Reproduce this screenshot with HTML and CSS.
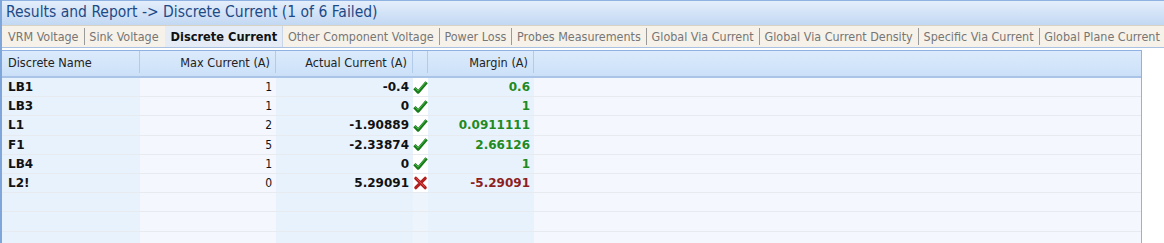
FILE: index.html
```html
<!DOCTYPE html>
<html lang="en">
<head>
  <meta charset="UTF-8">
  <title>Results and Report</title>
  <link rel="stylesheet" href="styles.css">
</head>
<body>

<div class="panel">
  <div class="title-bar">Results and Report -&gt; Discrete Current (1 of 6 Failed)</div>

  <div class="tabs">
    <span class="tab">VRM Voltage</span>
    <span class="tab">Sink Voltage</span>
    <span class="tab active">Discrete Current</span>
    <span class="tab">Other Component Voltage</span>
    <span class="tab">Power Loss</span>
    <span class="tab">Probes Measurements</span>
    <span class="tab">Global Via Current</span>
    <span class="tab">Global Via Current Density</span>
    <span class="tab">Specific Via Current</span>
    <span class="tab">Global Plane Current</span>
  </div>

  <div class="grid">
    <div class="row head">
      <div class="cell name">Discrete Name</div>
      <div class="cell max num">Max Current (A)</div>
      <div class="cell actual num">Actual Current (A)</div>
      <div class="cell status"></div>
      <div class="cell margin num">Margin (A)</div>
      <div class="cell rest"></div>
    </div>
    <div id="rows"></div>
  </div>
</div>

<script>
  const data = [
    { name: 'LB1', max: '1', actual: '-0.4', ok: true, margin: '0.6' },
    { name: 'LB3', max: '1', actual: '0', ok: true, margin: '1' },
    { name: 'L1', max: '2', actual: '-1.90889', ok: true, margin: '0.0911111' },
    { name: 'F1', max: '5', actual: '-2.33874', ok: true, margin: '2.66126' },
    { name: 'LB4', max: '1', actual: '0', ok: true, margin: '1' },
    { name: 'L2!', max: '0', actual: '5.29091', ok: false, margin: '-5.29091' }
  ];

  const checkIcon = '<svg width="17" height="17" viewBox="0 0 17 17">' +
    '<path d="M1.6 9.2 L5.8 13.8 L15.4 2.6" stroke="#16791a" stroke-width="3.6" fill="none" stroke-linejoin="round"/>' +
    '<path d="M2.3 9 L5.8 12.6 L14.6 2.4" stroke="#4fbf4a" stroke-width="1" fill="none"/></svg>';
  const crossIcon = '<svg width="16" height="16" viewBox="0 0 16 16">' +
    '<path d="M3 3 L13 13 M13 3 L3 13" stroke="#b3201f" stroke-width="3.4" stroke-linecap="round"/>' +
    '<path d="M3.5 3 L12.5 12" stroke="#d9534f" stroke-width="1"/></svg>';

  const rows = document.getElementById('rows');
  for (let i = 0; i < 9; i++) {
    const d = data[i];
    const row = document.createElement('div');
    row.className = 'row';
    if (d) {
      row.innerHTML =
        '<div class="cell name bold">' + d.name + '</div>' +
        '<div class="cell max num">' + d.max + '</div>' +
        '<div class="cell actual num bold">' + d.actual + '</div>' +
        '<div class="cell status filled">' + (d.ok ? checkIcon : crossIcon) + '</div>' +
        '<div class="cell margin num bold ' + (d.ok ? 'pass' : 'fail') + '">' + d.margin + '</div>' +
        '<div class="cell rest"></div>';
    } else {
      row.innerHTML =
        '<div class="cell name"></div><div class="cell max"></div><div class="cell actual"></div>' +
        '<div class="cell status"></div><div class="cell margin"></div><div class="cell rest"></div>';
    }
    rows.appendChild(row);
  }
</script>

</body>
</html>
```

FILE: styles.css
```css
* {
  margin: 0;
  padding: 0;
  box-sizing: border-box;
}

body {
  background-color: #ffffff;
  font-family: "DejaVu Sans Condensed", "DejaVu Sans", sans-serif;
  height: 243px;
  overflow: hidden;
}

.panel {
  border-left: 2px solid #7ea6da;
  height: 243px;
  overflow: hidden;
}

.title-bar {
  height: 25px;
  border-top: 1px solid #8fb2e2;
  background: linear-gradient(#e4eefb, #c2d8f3);
  color: #1d4a86;
  font-size: 15.5px;
  line-height: 23px;
  padding-left: 4px;
  white-space: nowrap;
}

.tabs {
  display: flex;
  height: 23px;
  background-color: #f6f2e9;
  border-top: 1px solid #d8d2c4;
  border-bottom: 1px solid #a9c2e4;
  font-size: 12.45px;
  color: #767676;
  white-space: nowrap;
}

.tab {
  padding: 0 5px 0 4.8px;
  border-left: 1px solid #9a9a9a;
  margin: 2px 0;
  line-height: 17px;
}

.tab:first-child {
  border-left: none;
  padding-left: 6px;
}

.tab.active,
.tab.active + .tab {
  border-left: none;
}

.tab.active {
  background-color: #e5ecf5;
  color: #111;
  font-size: 12.7px;
  font-weight: bold;
  padding: 0 5px 0 6px;
  margin: 0 0 0 1px;
  line-height: 21px;
  border-right: 1px solid #c9d6e8;
}

.grid {
  margin-top: 2px;
  width: 1140px;
  border-top: 1px solid #8fb2e2;
  border-right: 1px solid #8fb2e2;
  font-size: 12px;
  color: #111;
}

.row {
  display: flex;
  height: 19.2px;
  border-bottom: 1px solid #e7ebef;
}

.cell {
  display: flex;
  align-items: center;
  padding: 0 4px;
  white-space: nowrap;
}

.num {
  justify-content: flex-end;
}

.bold {
  font-family: "DejaVu Sans", sans-serif;
  font-weight: bold;
}

.name   { width: 138px; background-color: #e8f2fd; padding-left: 6px; }
.max    { width: 136px; background-color: #f4f8fe; }
.actual { width: 137px; background-color: #e8f2fd; }
.status { width: 15px;  background-color: #edf4fc; padding: 0; justify-content: center; }
.margin { width: 106px; background-color: #e8f2fd; }
.rest   { flex: 1;      background-color: #f4f8fe; }

.status.filled {
  background-color: #ffffff;
  overflow: visible;
}

.pass { color: #1f8a1f; }
.fail { color: #8e1f1f; }

.row.head {
  height: 27px;
  padding-bottom: 3px;
  border-bottom: 2px solid #a9c4e6;
  background: linear-gradient(#dcebfc, #cbe0f8);
  color: #222;
  font-size: 12.6px;
}

.row.head .cell {
  background: none;
  border-right: 1px solid #b3cbe8;
  padding-right: 5px;
}

.row.head .rest {
  border-right: none;
}
```
